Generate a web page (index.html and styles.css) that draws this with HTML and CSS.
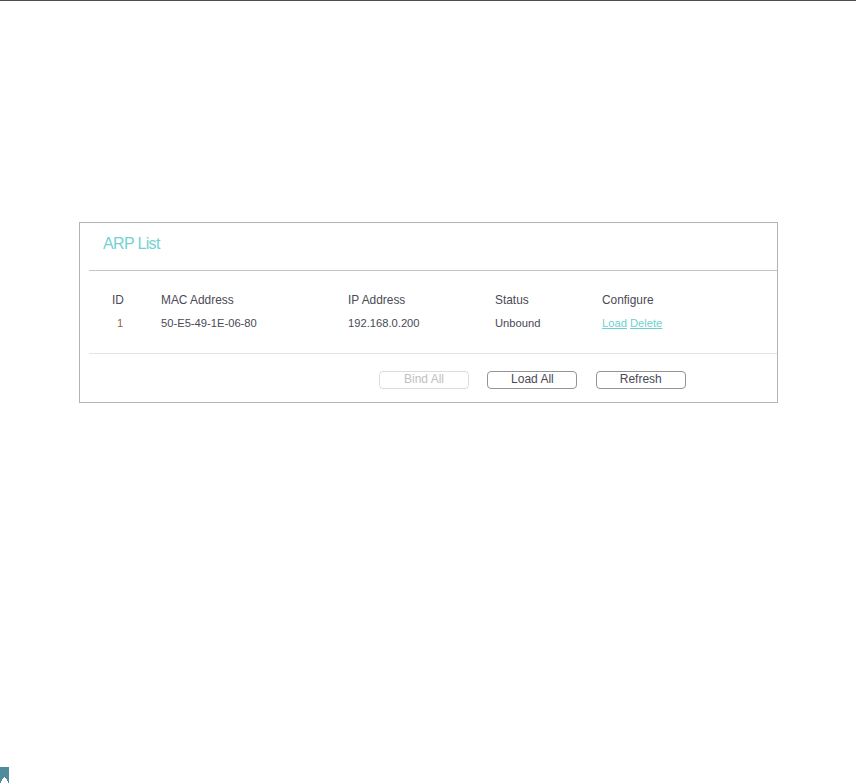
FILE: index.html
```html
<!DOCTYPE html>
<html lang="en">
<head>
<meta charset="utf-8">
<title>ARP List</title>
<link rel="stylesheet" href="styles.css">
</head>
<body>
<div class="topbar"></div>
<main class="content">
  <section class="panel">
    <h2 class="panel-title">ARP List</h2>
    <div class="table-area">
      <div class="row head">
        <span class="c-id">ID</span>
        <span class="c-mac">MAC Address</span>
        <span class="c-ip">IP Address</span>
        <span class="c-status">Status</span>
        <span class="c-conf">Configure</span>
      </div>
      <div class="row data">
        <span class="c-id num">1</span>
        <span class="c-mac">50-E5-49-1E-06-80</span>
        <span class="c-ip">192.168.0.200</span>
        <span class="c-status">Unbound</span>
        <span class="c-conf"><a href="#">Load</a> <a href="#">Delete</a></span>
      </div>
    </div>
    <div class="actions">
      <button class="btn" disabled>Bind All</button>
      <button class="btn">Load All</button>
      <button class="btn">Refresh</button>
    </div>
  </section>
</main>
<svg class="bookmark" width="9" height="16" viewBox="0 0 9 16"><path d="M0 0H9V16H8V14H7V12H6V11H5V10H4V11H3V12H2V14H1V16H0Z" fill="#4f8c9b"/></svg>
</body>
</html>
```
FILE: styles.css
```css
html, body {
  margin: 0;
  height: 100%;
  background: #fff;
  overflow: hidden;
}
body {
  position: relative;
  font-family: "Liberation Sans", Arial, sans-serif;
  color: #4a4a55;
}
.topbar {
  height: 1px;
  background: #4a4f55;
}
.content {
  padding: 221px 78px 0 79px;
}
.panel {
  box-sizing: border-box;
  width: 699px;
  height: 181px;
  border: 1px solid #b4b4b4;
  display: flex;
  flex-direction: column;
}
.panel-title {
  margin: 0 0 0 9px;
  padding: 12px 0 0 14px;
  height: 35px;
  border-bottom: 1px solid #c4c4c4;
  font-size: 16px;
  letter-spacing: -0.65px;
  line-height: 18px;
  font-weight: normal;
  color: #72d2d2;
}
.table-area {
  margin-left: 9px;
  height: 83px;
  box-sizing: border-box;
  padding-top: 20px;
  border-bottom: 1px solid #e4e4e4;
}
.row {
  display: flex;
}
.head {
  font-size: 11.9px;
  line-height: 18px;
  height: 23px;
}
.data {
  font-size: 11.2px;
  line-height: 18px;
}
.c-id { width: 49px; padding-left: 23px; }
.c-id.num { color: #8a6a4a; padding-left: 28px; width: 44px; }
.c-mac { width: 187px; }
.c-ip { width: 147px; }
.c-status { width: 107px; }
.c-conf { flex: 1; }
.c-conf a { color: #6fd0d0; text-decoration: underline; }
.actions {
  display: flex;
  gap: 18.4px;
  padding: 17px 0 0 299px;
}
.btn {
  box-sizing: border-box;
  width: 90px;
  height: 18px;
  padding: 0 0 2px;
  background: #fff;
  border: 1px solid #949494;
  border-radius: 4px;
  font: 12px/14px "Liberation Sans", Arial, sans-serif;
  color: #4a4a55;
}
.btn:disabled {
  border-color: #dcdcdc;
  color: #c0c0c0;
}
.bookmark {
  position: absolute;
  left: 0;
  bottom: 0;
  display: block;
}
```
